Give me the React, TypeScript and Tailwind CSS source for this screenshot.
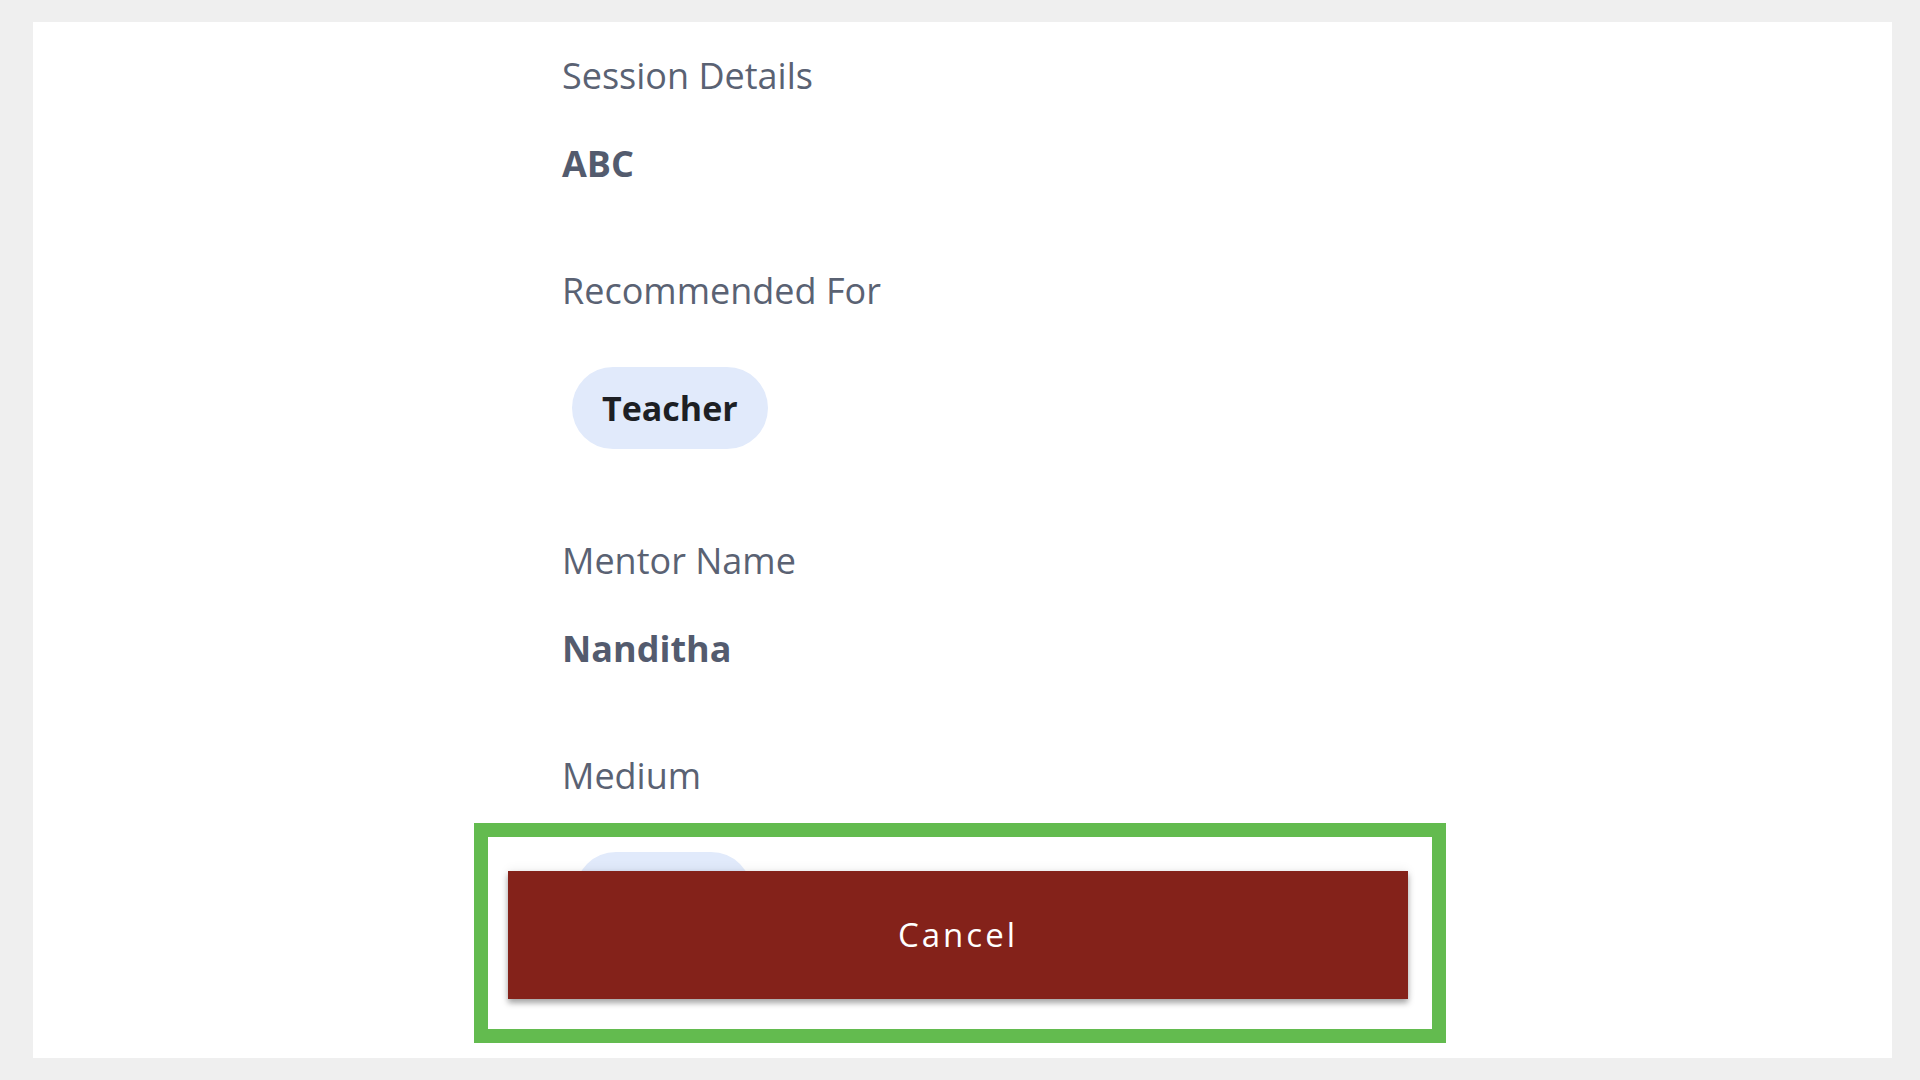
export default function App() {
  return (
    <main
      className="w-full h-screen bg-[#efefef] pl-[33px] pr-[28px] py-[22px]"
      style={{ fontFamily: '"Open Sans", "Noto Sans", sans-serif' }}
    >
      <div className="relative h-full bg-white overflow-hidden">
        <div className="pl-[529px] pt-[30px] flex flex-col items-start">
          <div className="text-[36px] leading-[48px] text-[#5a6273]">Session Details</div>
          <div className="mt-[40px] text-[36px] leading-[48px] font-bold text-[#535b6e]">ABC</div>

          <div className="mt-[79px] text-[36px] leading-[48px] text-[#5a6273]">Recommended For</div>
          <div className="mt-[52px] ml-[10px] h-[82px] px-[30px] flex items-center rounded-full bg-[#e1eafb] text-[34px] font-bold text-[#1d1f24]">
            Teacher
          </div>

          <div className="mt-[88px] text-[36px] leading-[48px] text-[#5a6273]">Mentor Name</div>
          <div className="mt-[40px] text-[36px] leading-[48px] font-bold text-[#535b6e]">Nanditha</div>

          <div className="mt-[79px] text-[36px] leading-[48px] text-[#5a6273]">Medium</div>
          <div className="mt-[52px] ml-[13px] h-[82px] px-[28px] flex items-center rounded-full bg-[#e1eafb] text-[34px] font-bold text-[#1d1f24]">
            English
          </div>
        </div>

        {/* footer action, highlighted */}
        <div className="absolute left-[441px] top-[801px] w-[972px] h-[220px] border-[14px] border-[#63bb4f]">
          <div className="ml-[20px] mt-[34px] w-[900px] h-[128px] bg-[#84221a] shadow-[0_4px_6px_rgba(0,0,0,0.35),0_-2px_10px_rgba(0,0,0,0.06)] flex items-center justify-center">
            <span className="text-[33px] tracking-[3px] text-white">Cancel</span>
          </div>
        </div>
      </div>
    </main>
  );
}
